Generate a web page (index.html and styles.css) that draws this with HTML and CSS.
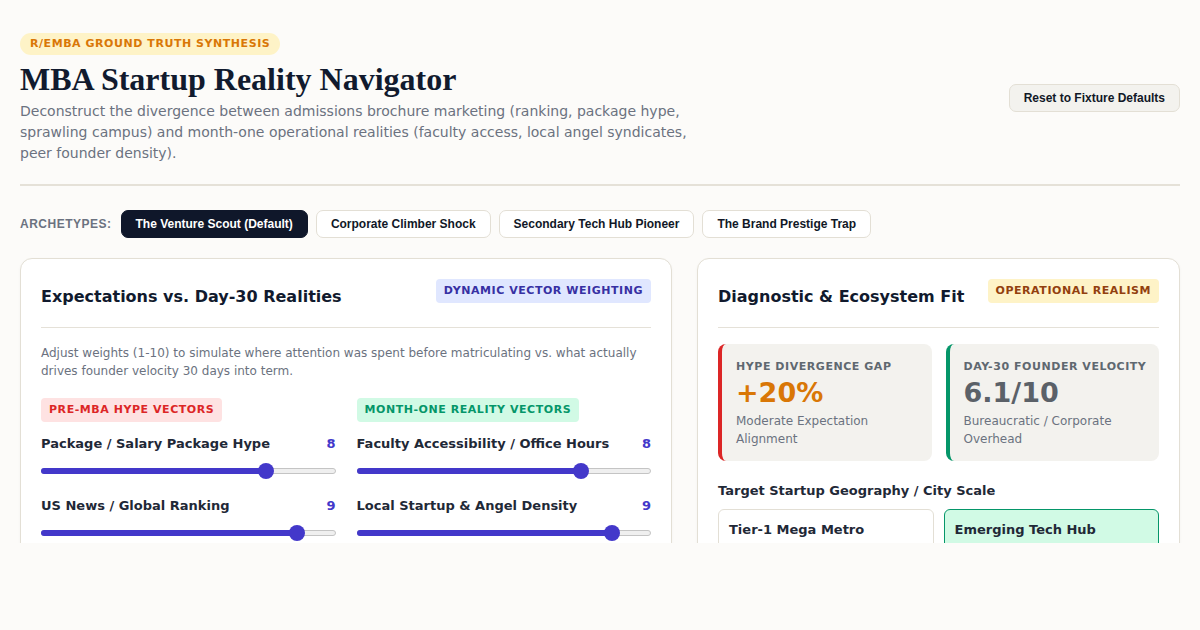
FILE: index.html
```html
<!DOCTYPE html>
<html lang="en">
<head>
<meta charset="utf-8">
<title>MBA Startup Reality Navigator</title>
<link rel="stylesheet" href="styles.css">
</head>
<body>
<div class="app">
  <header class="top">
    <div class="intro">
      <span class="pill">R/EMBA GROUND TRUTH SYNTHESIS</span>
      <h1 class="title">MBA Startup Reality Navigator</h1>
      <p class="lede">Deconstruct the divergence between admissions brochure marketing (ranking, package hype, sprawling campus) and month-one operational realities (faculty access, local angel syndicates, peer founder density).</p>
    </div>
    <button class="reset">Reset to Fixture Defaults</button>
  </header>
  <hr class="rule">
  <nav class="arche">
    <span class="arche-label">ARCHETYPES:</span>
    <button class="chip active">The Venture Scout (Default)</button>
    <button class="chip">Corporate Climber Shock</button>
    <button class="chip">Secondary Tech Hub Pioneer</button>
    <button class="chip">The Brand Prestige Trap</button>
  </nav>
  <main class="grid">
    <section class="card">
      <div class="card-head">
        <h2 class="card-title">Expectations vs. Day-30 Realities</h2>
        <span class="tag tag-indigo">DYNAMIC VECTOR WEIGHTING</span>
      </div>
      <p class="note">Adjust weights (1-10) to simulate where attention was spent before matriculating vs. what actually drives founder velocity 30 days into term.</p>
      <div class="cols">
        <div class="col">
          <span class="tag tag-red">PRE-MBA HYPE VECTORS</span>
          <div class="slider">
            <div class="slider-row"><span class="slider-label">Package / Salary Package Hype</span><span class="slider-val">8</span></div>
            <div class="track"><div class="fill" style="width: 77.8%"><span class="thumb"></span></div></div>
          </div>
          <div class="slider">
            <div class="slider-row"><span class="slider-label">US News / Global Ranking</span><span class="slider-val">9</span></div>
            <div class="track"><div class="fill" style="width: 88.9%"><span class="thumb"></span></div></div>
          </div>
        </div>
        <div class="col">
          <span class="tag tag-green">MONTH-ONE REALITY VECTORS</span>
          <div class="slider">
            <div class="slider-row"><span class="slider-label">Faculty Accessibility / Office Hours</span><span class="slider-val">8</span></div>
            <div class="track"><div class="fill" style="width: 77.8%"><span class="thumb"></span></div></div>
          </div>
          <div class="slider">
            <div class="slider-row"><span class="slider-label">Local Startup &amp; Angel Density</span><span class="slider-val">9</span></div>
            <div class="track"><div class="fill" style="width: 88.9%"><span class="thumb"></span></div></div>
          </div>
        </div>
      </div>
    </section>
    <section class="card">
      <div class="card-head">
        <h2 class="card-title">Diagnostic &amp; Ecosystem Fit</h2>
        <span class="tag tag-amber">OPERATIONAL REALISM</span>
      </div>
      <div class="stats">
        <div class="stat stat-red">
          <div class="stat-label">HYPE DIVERGENCE GAP</div>
          <div class="stat-value orange">+20%</div>
          <div class="stat-sub">Moderate Expectation Alignment</div>
        </div>
        <div class="stat stat-green">
          <div class="stat-label">DAY-30 FOUNDER VELOCITY</div>
          <div class="stat-value slate">6.1/10</div>
          <div class="stat-sub">Bureaucratic / Corporate Overhead</div>
        </div>
      </div>
      <h3 class="sub-head">Target Startup Geography / City Scale</h3>
      <div class="options">
        <div class="opt">Tier-1 Mega Metro</div>
        <div class="opt selected">Emerging Tech Hub</div>
      </div>
    </section>
  </main>
</div>
</body>
</html>
```
FILE: styles.css
```css
* { box-sizing: border-box; }
html, body { margin: 0; padding: 0; }
body {
  background: #fcfbf9;
  font-family: "DejaVu Sans", sans-serif;
  color: #111827;
}
.app {
  height: 543px;
  overflow: hidden;
  padding: 32px 20px 0;
}
.top {
  display: flex;
  justify-content: space-between;
  align-items: center;
}
.intro { max-width: 690px; }
.pill {
  display: inline-block;
  background: #fef3c7;
  color: #d97706;
  font-size: 11px;
  font-weight: bold;
  letter-spacing: 0.55px;
  padding: 4px 10px;
  border-radius: 999px;
  line-height: 14px;
}
.title {
  font-family: "Liberation Serif", serif;
  font-size: 32px;
  font-weight: bold;
  color: #111a2e;
  margin: 5px 0 3px;
  line-height: 38px;
}
.lede {
  margin: 0;
  font-size: 14px;
  line-height: 21px;
  color: #6b7280;
}
.reset {
  font-family: "Liberation Sans", Arial, sans-serif;
  font-size: 12px;
  font-weight: bold;
  color: #111827;
  background: #f3f2ee;
  border: 1px solid #e3dfd5;
  border-radius: 7px;
  height: 28px;
  padding: 0 14px;
  margin-top: 0;
}
.rule {
  border: 0;
  border-top: 2px solid #e5e1d8;
  margin: 20px 0 24px;
}
.arche {
  display: flex;
  align-items: center;
  gap: 8px;
}
.arche-label {
  font-family: "Liberation Sans", Arial, sans-serif;
  font-size: 12px;
  font-weight: bold;
  color: #6b7280;
  letter-spacing: 0.5px;
  margin-right: 1px;
}
.chip {
  font-family: "Liberation Sans", Arial, sans-serif;
  font-size: 12px;
  font-weight: bold;
  color: #111827;
  background: #fff;
  border: 1px solid #e3dfd5;
  border-radius: 7px;
  height: 28px;
  padding: 0 14px;
}
.chip.active {
  background: #0f172a;
  border-color: #0f172a;
  color: #fff;
}
.grid {
  display: grid;
  grid-template-columns: 652px 1fr;
  gap: 25px;
  margin-top: 20px;
}
.card {
  background: #fff;
  border: 1px solid #e3dfd5;
  border-radius: 12px;
  padding: 20px;
  box-shadow: 0 1px 3px rgba(0,0,0,0.04);
  height: 320px;
}
.card-head {
  display: flex;
  justify-content: space-between;
  align-items: flex-start;
  border-bottom: 1px solid #e5e1d8;
  height: 49px;
}
.card-title {
  margin: 8px 0 0;
  font-size: 16px;
  font-weight: bold;
  color: #111a2e;
  line-height: 20px;
}
.tag {
  display: inline-block;
  font-size: 11px;
  font-weight: bold;
  letter-spacing: 0.55px;
  padding: 5px 8px;
  border-radius: 4px;
  line-height: 14px;
}
.tag-indigo { background: #e0e7ff; color: #3730a3; }
.tag-amber { background: #fef3c7; color: #92400e; }
.tag-red { background: #fee2e2; color: #dc2626; }
.tag-green { background: #d1fae5; color: #059669; }
.note {
  font-size: 12px;
  line-height: 18px;
  color: #6b7280;
  margin: 16px 0 18px;
}
.cols {
  display: grid;
  grid-template-columns: 1fr 1fr;
  gap: 21px;
}
.col { display: flex; flex-direction: column; align-items: stretch; }
.col .tag { align-self: flex-start; margin-bottom: 14px; }
.slider { margin-bottom: 24px; }
.slider-row {
  display: flex;
  justify-content: space-between;
  font-size: 13px;
  font-weight: bold;
  line-height: 16px;
  color: #1f2937;
}
.slider-val { color: #4338ca; }
.track {
  margin: 16px 8px 0;
  height: 6px;
  position: relative;
}
.track::before {
  content: "";
  position: absolute;
  left: -8px; right: -8px; top: 0; bottom: 0;
  background: #efefef;
  border: 1px solid #c4c4c4;
  border-radius: 4px;
}
.fill {
  position: absolute;
  left: 0; top: 0; bottom: 0;
  background: #4338ca;
}
.fill::before {
  content: "";
  position: absolute;
  left: -8px; top: 0; bottom: 0; width: 8px;
  background: #4338ca;
  border-radius: 4px 0 0 4px;
}
.thumb {
  position: absolute;
  right: -8px;
  top: 50%;
  width: 16px; height: 16px;
  margin-top: -8px;
  border-radius: 50%;
  background: #4338ca;
}
.stats {
  display: grid;
  grid-template-columns: 1fr 1fr;
  gap: 14px;
  margin-top: 16px;
}
.stat {
  background: #f3f2ee;
  border-radius: 8px;
  padding: 16px 12px 14px 14px;
  height: 117px;
}
.stat-red { border-left: 4px solid #dc2626; }
.stat-green { border-left: 4px solid #059669; }
.stat-label {
  font-size: 11px;
  font-weight: bold;
  letter-spacing: 0.55px;
  color: #5f6870;
  line-height: 14px;
}
.stat-value {
  font-size: 27px;
  font-weight: bold;
  line-height: 32px;
  margin-top: 3px;
}
.orange { color: #d97706; }
.slate { color: #5b6168; }
.stat-sub {
  font-size: 12px;
  line-height: 18px;
  color: #6b7280;
  margin-top: 3px;
}
.sub-head {
  font-size: 13px;
  font-weight: bold;
  color: #1f2937;
  margin: 22px 0 10px;
  line-height: 16px;
}
.options {
  display: grid;
  grid-template-columns: 1fr 1fr;
  gap: 10px;
}
.opt {
  border: 1px solid #e3dfd5;
  border-radius: 6px;
  padding: 12px 10px;
  font-size: 13px;
  font-weight: bold;
  color: #1f2937;
  height: 60px;
}
.opt.selected {
  background: #d1fae5;
  border-color: #059669;
}
```
